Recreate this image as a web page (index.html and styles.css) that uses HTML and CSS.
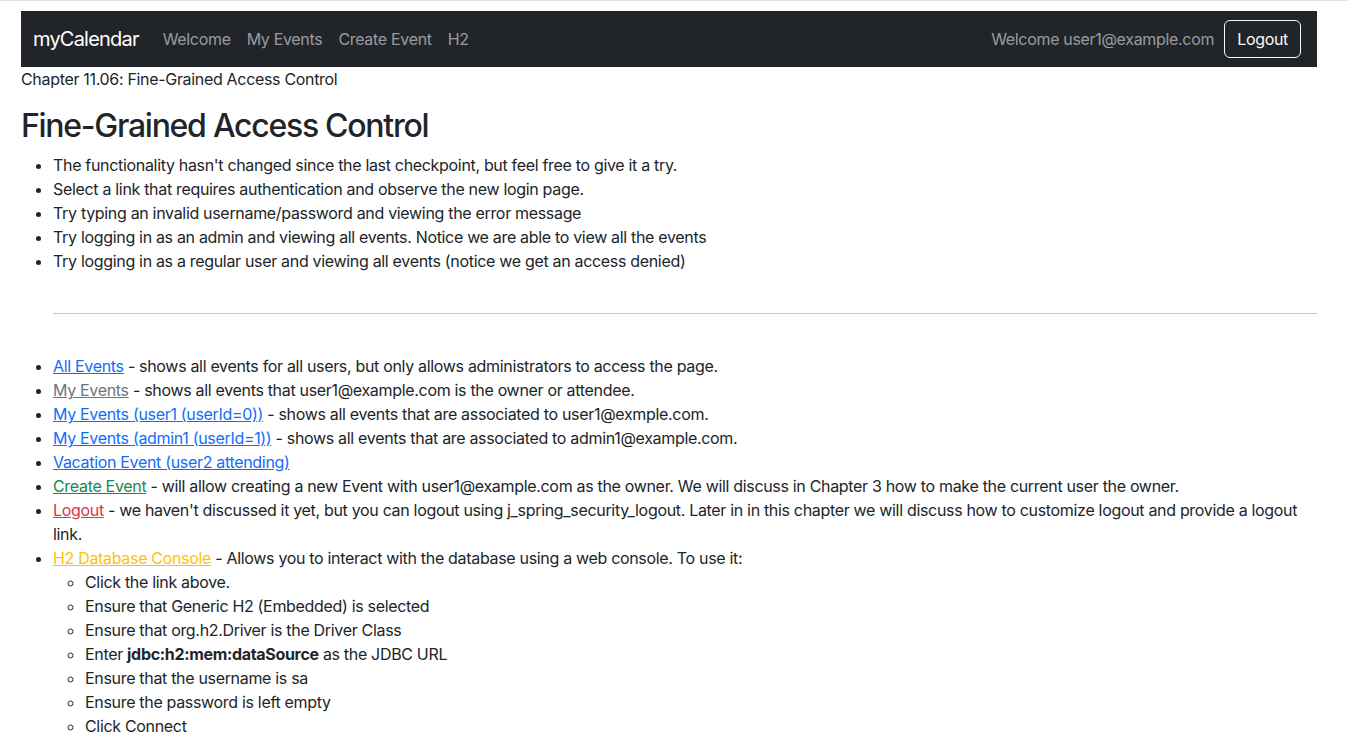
FILE: index.html
```html
<!DOCTYPE html>
<html lang="en">
<head>
<meta charset="utf-8">
<title>myCalendar</title>
<link rel="stylesheet" href="styles.css">
</head>
<body>
<div class="page">
  <nav class="navbar">
    <a class="brand" href="#">myCalendar</a>
    <ul class="nav">
      <li><a class="nav-link" href="#">Welcome</a></li>
      <li><a class="nav-link" href="#">My Events</a></li>
      <li><a class="nav-link" href="#">Create Event</a></li>
      <li><a class="nav-link" href="#">H2</a></li>
    </ul>
    <div class="nav-right">
      <span class="nav-text">Welcome user1@example.com</span>
      <button class="btn-logout" type="button">Logout</button>
    </div>
  </nav>
  <p class="chapter">Chapter 11.06: Fine-Grained Access Control</p>
  <h1 class="title">Fine-Grained Access Control</h1>
  <ul class="list">
    <li>The functionality hasn't changed since the last checkpoint, but feel free to give it a try.</li>
    <li>Select a link that requires authentication and observe the new login page.</li>
    <li>Try typing an invalid username/password and viewing the error message</li>
    <li>Try logging in as an admin and viewing all events. Notice we are able to view all the events</li>
    <li>Try logging in as a regular user and viewing all events (notice we get an access denied)</li>
  </ul>
  <hr class="divider">
  <ul class="list">
    <li><a class="link-primary" href="#">All Events</a> - shows all events for all users, but only allows administrators to access the page.</li>
    <li><a class="link-secondary" href="#">My Events</a> - shows all events that user1@example.com is the owner or attendee.</li>
    <li><a class="link-primary" href="#">My Events (user1 (userId=0))</a> - shows all events that are associated to user1@exmple.com.</li>
    <li><a class="link-primary" href="#">My Events (admin1 (userId=1))</a> - shows all events that are associated to admin1@example.com.</li>
    <li><a class="link-primary" href="#">Vacation Event (user2 attending)</a></li>
    <li><a class="link-success" href="#">Create Event</a> - will allow creating a new Event with user1@example.com as the owner. We will discuss in Chapter 3 how to make the current user the owner.</li>
    <li><a class="link-danger" href="#">Logout</a> - we haven't discussed it yet, but you can logout using j_spring_security_logout. Later in in this chapter we will discuss how to customize logout and provide a logout link.</li>
    <li><a class="link-warning" href="#">H2 Database Console</a> - Allows you to interact with the database using a web console. To use it:
      <ul class="sublist">
        <li>Click the link above.</li>
        <li>Ensure that Generic H2 (Embedded) is selected</li>
        <li>Ensure that org.h2.Driver is the Driver Class</li>
        <li>Enter <strong>jdbc:h2:mem:dataSource</strong> as the JDBC URL</li>
        <li>Ensure that the username is sa</li>
        <li>Ensure the password is left empty</li>
        <li>Click Connect</li>
      </ul>
    </li>
  </ul>
</div>
</body>
</html>
```
FILE: styles.css
```css
html, body {
  margin: 0;
  padding: 0;
}
body {
  font-family: Inter, "Liberation Sans", Arial, sans-serif;
  font-size: 16px;
  line-height: 24px;
  letter-spacing: -0.02em;
  color: #212529;
  background: #fff;
  border-top: 1px solid #e3e3e3;
}
.page {
  padding: 10px 31px 0 21px;
}
.navbar {
  display: flex;
  align-items: center;
  background: #212529;
  height: 56px;
  padding: 0 16px 0 12px;
  box-sizing: border-box;
}
.brand {
  color: #fff;
  font-size: 20px;
  line-height: 30px;
  letter-spacing: -0.04em;
  text-decoration: none;
  margin-right: 16px;
}
.nav {
  display: flex;
  list-style: none;
  margin: 0;
  padding: 0;
}
.nav-link {
  display: block;
  padding: 8px;
  color: rgba(255, 255, 255, 0.55);
  text-decoration: none;
}
.nav-right {
  margin-left: auto;
  display: flex;
  align-items: center;
}
.nav-text {
  color: rgba(255, 255, 255, 0.55);
  margin-right: 10px;
}
.btn-logout {
  font-family: inherit;
  font-size: 16px;
  line-height: 24px;
  letter-spacing: -0.02em;
  color: #f8f9fa;
  background: transparent;
  border: 1px solid #f8f9fa;
  border-radius: 6px;
  padding: 6px 12px;
}
.chapter {
  margin: 0 0 16px;
}
.title {
  font-size: 32px;
  font-weight: 500;
  line-height: 38px;
  letter-spacing: -0.04em;
  margin: 0 0 8px;
}
.list {
  margin: 0 0 16px;
  padding-left: 32px;
}
.divider {
  margin: 40px 0 40px 32px;
  border: 0;
  border-top: 1px solid #212529;
  opacity: 0.25;
}
.sublist {
  list-style: circle;
  margin: 0;
  padding-left: 32px;
}
strong {
  font-weight: 700;
}
.link-primary { color: #0d6efd; }
.link-secondary { color: #6c757d; }
.link-success { color: #198754; }
.link-danger { color: #dc3545; }
.link-warning { color: #ffc107; }
```
